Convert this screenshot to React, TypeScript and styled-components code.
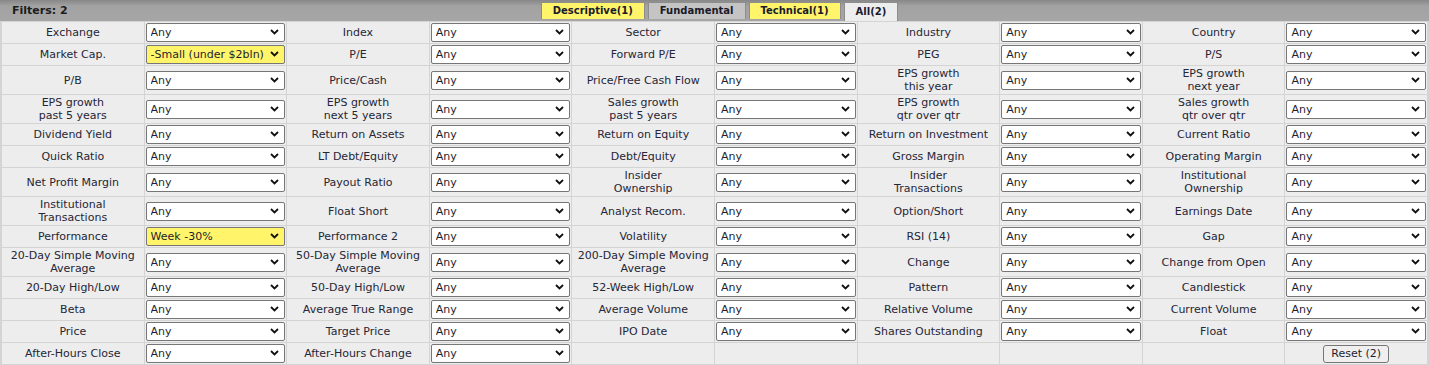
import React from "react";
import styled, { createGlobalStyle } from "styled-components";

const GlobalStyle = createGlobalStyle`
  body {
    margin: 0;
    background: #ffffff;
    font-family: "DejaVu Sans", Verdana, sans-serif;
  }
`;

type Filter = { label: string; value?: string; active?: boolean };

const rows: Filter[][] = [
  [{ label: "Exchange" }, { label: "Index" }, { label: "Sector" }, { label: "Industry" }, { label: "Country" }],
  [
    { label: "Market Cap.", value: "-Small (under $2bln)", active: true },
    { label: "P/E" },
    { label: "Forward P/E" },
    { label: "PEG" },
    { label: "P/S" },
  ],
  [
    { label: "P/B" },
    { label: "Price/Cash" },
    { label: "Price/Free Cash Flow" },
    { label: "EPS growth\nthis year" },
    { label: "EPS growth\nnext year" },
  ],
  [
    { label: "EPS growth\npast 5 years" },
    { label: "EPS growth\nnext 5 years" },
    { label: "Sales growth\npast 5 years" },
    { label: "EPS growth\nqtr over qtr" },
    { label: "Sales growth\nqtr over qtr" },
  ],
  [
    { label: "Dividend Yield" },
    { label: "Return on Assets" },
    { label: "Return on Equity" },
    { label: "Return on Investment" },
    { label: "Current Ratio" },
  ],
  [
    { label: "Quick Ratio" },
    { label: "LT Debt/Equity" },
    { label: "Debt/Equity" },
    { label: "Gross Margin" },
    { label: "Operating Margin" },
  ],
  [
    { label: "Net Profit Margin" },
    { label: "Payout Ratio" },
    { label: "Insider\nOwnership" },
    { label: "Insider\nTransactions" },
    { label: "Institutional\nOwnership" },
  ],
  [
    { label: "Institutional\nTransactions" },
    { label: "Float Short" },
    { label: "Analyst Recom." },
    { label: "Option/Short" },
    { label: "Earnings Date" },
  ],
  [
    { label: "Performance", value: "Week -30%", active: true },
    { label: "Performance 2" },
    { label: "Volatility" },
    { label: "RSI (14)" },
    { label: "Gap" },
  ],
  [
    { label: "20-Day Simple Moving\nAverage" },
    { label: "50-Day Simple Moving\nAverage" },
    { label: "200-Day Simple Moving\nAverage" },
    { label: "Change" },
    { label: "Change from Open" },
  ],
  [
    { label: "20-Day High/Low" },
    { label: "50-Day High/Low" },
    { label: "52-Week High/Low" },
    { label: "Pattern" },
    { label: "Candlestick" },
  ],
  [
    { label: "Beta" },
    { label: "Average True Range" },
    { label: "Average Volume" },
    { label: "Relative Volume" },
    { label: "Current Volume" },
  ],
  [
    { label: "Price" },
    { label: "Target Price" },
    { label: "IPO Date" },
    { label: "Shares Outstanding" },
    { label: "Float" },
  ],
  [{ label: "After-Hours Close" }, { label: "After-Hours Change" }],
];

const tabs = [
  { name: "Descriptive(1)", kind: "set" },
  { name: "Fundamental", kind: "off" },
  { name: "Technical(1)", kind: "set" },
  { name: "All(2)", kind: "on" },
] as const;

const Panel = styled.div`
  width: 1429px;
  font-size: 11px;
  color: #262636;
`;

const Header = styled.div`
  position: relative;
  height: 21px;
  background: linear-gradient(#878787 0, #a2a2a2 6px, #a6a6a6 100%);
  display: flex;
  align-items: flex-end;
  justify-content: center;
`;

const Count = styled.div`
  position: absolute;
  left: 12px;
  top: 4px;
  font-weight: bold;
  font-size: 11px;
  color: #1c1c1c;
`;

const Tabs = styled.div`
  display: flex;
  gap: 3px;
  margin-left: 10px;
`;

const Tab = styled.div<{ $kind: "set" | "off" | "on" }>`
  padding: 0 11px;
  font-weight: bold;
  font-size: 10px;
  color: #1a1a2a;
  border: 1px solid #8d8d8d;
  border-bottom: none;
  background: ${(p) =>
    p.$kind === "set" ? "#fff46a" : p.$kind === "on" ? "#ededed" : "#c4c4c4"};
  height: ${(p) => (p.$kind === "on" ? "18px" : "16px")};
  line-height: ${(p) => (p.$kind === "on" ? "17px" : "16px")};
  margin-bottom: ${(p) => (p.$kind === "on" ? "0" : "1px")};
`;

const Grid = styled.div`
  display: grid;
  grid-template-columns: repeat(10, 1fr);
  gap: 1px;
  padding: 1px 2px 1px 2px;
  background: #d4d4d4;
`;

const Label = styled.div`
  background: #ededed;
  min-height: 21px;
  display: flex;
  align-items: center;
  justify-content: center;
  text-align: center;
  white-space: pre-line;
  line-height: 13px;
  padding: 1px 2px;
  box-sizing: border-box;
`;

const Field = styled.div`
  background: #ededed;
  display: flex;
  align-items: center;
  padding: 1px;
`;

const SelectWrap = styled.div`
  position: relative;
  width: 100%;
`;

const Select = styled.select<{ $active?: boolean }>`
  appearance: none;
  width: 100%;
  height: 19px;
  box-sizing: border-box;
  border: 1px solid #767676;
  border-radius: 2px;
  background: ${(p) => (p.$active ? "#fff46a" : "#ffffff")};
  font-family: "DejaVu Sans", Verdana, sans-serif;
  font-size: 11px;
  color: #1e1e2e;
  padding: 0 16px 0 4px;
  margin: 0;
  outline: none;
`;

const Chevron = styled.svg`
  position: absolute;
  right: 6px;
  top: 6px;
  pointer-events: none;
`;

const Empty = styled.div`
  background: #ededed;
  min-height: 21px;
  display: flex;
  align-items: center;
  justify-content: center;
`;

const ResetButton = styled.button`
  font-family: "DejaVu Sans", Verdana, sans-serif;
  font-size: 11px;
  color: #1e1e2e;
  background: #efefef;
  border: 1px solid #767676;
  border-radius: 3px;
  height: 18px;
  padding: 0 7px;
  line-height: 14px;
`;

const FilterSelect: React.FC<{ value: string; active?: boolean }> = ({ value, active }) => (
  <SelectWrap>
    <Select $active={active} defaultValue={value}>
      <option value={value}>{value}</option>
    </Select>
    <Chevron width="9" height="6" viewBox="0 0 9 6">
      <path d="M1 1l3.5 3.5L8 1" fill="none" stroke="#111" strokeWidth="1.8" />
    </Chevron>
  </SelectWrap>
);

const App: React.FC = () => {
  return (
    <>
      <GlobalStyle />
      <Panel>
        <Header>
          <Count>Filters: 2</Count>
          <Tabs>
            {tabs.map((t) => (
              <Tab key={t.name} $kind={t.kind}>
                {t.name}
              </Tab>
            ))}
          </Tabs>
        </Header>
        <Grid>
          {rows.map((row, i) => {
            const cells: React.ReactNode[] = [];
            row.forEach((f) => {
              cells.push(<Label key={`l${i}${f.label}`}>{f.label}</Label>);
              cells.push(
                <Field key={`s${i}${f.label}`}>
                  <FilterSelect value={f.value ?? "Any"} active={f.active} />
                </Field>
              );
            });
            while (cells.length < 9) cells.push(<Empty key={`e${i}${cells.length}`} />);
            if (cells.length < 10)
              cells.push(
                <Empty key={`r${i}`}>
                  <ResetButton>Reset (2)</ResetButton>
                </Empty>
              );
            return cells;
          })}
        </Grid>
      </Panel>
    </>
  );
};

export default App;
